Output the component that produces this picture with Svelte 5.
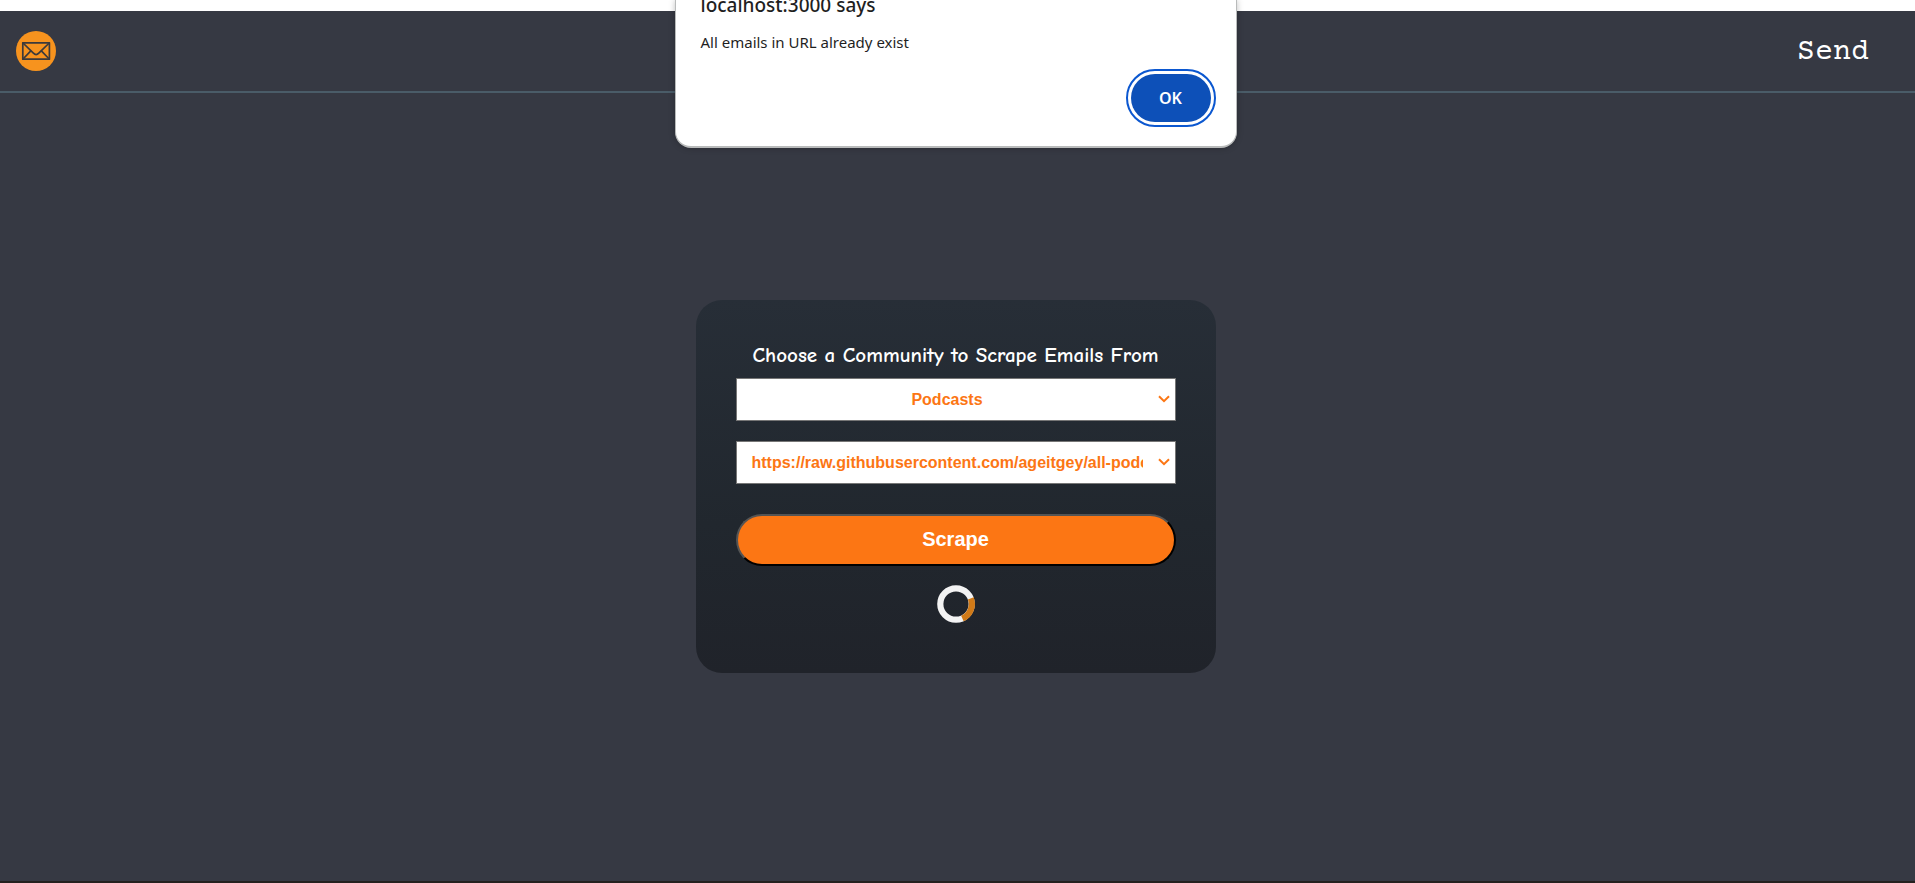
<script>
  const communities = ['Podcasts', 'Startups', 'Newsletters'];
  const sources = [
    'https://raw.githubusercontent.com/ageitgey/all-podcasts/master/README.md'
  ];

  let community = $state('Podcasts');
  let source = $state(sources[0]);
  let loading = $state(true);
  let alertOpen = $state(true);

  function scrape(event) {
    event.preventDefault();
    loading = true;
  }
</script>

<div class="page">
  <header>
    <a class="logo" href="#home" aria-label="Home">
      <svg viewBox="0 0 40 40" width="40" height="40" aria-hidden="true">
        <circle cx="20" cy="20" r="20" fill="#f7931e" />
        <g fill="none" stroke="#3b3a3c" stroke-width="1.7" stroke-linejoin="round" stroke-linecap="round">
          <rect x="6.8" y="11.8" width="26.6" height="16.4" />
          <path d="M7 12 L17.4 22.2 Q20.1 25 22.8 22.2 L33.2 12" />
          <path d="M7 28 L14.6 20.2 M33.2 28 L25.6 20.2" />
        </g>
      </svg>
    </a>
    <nav><a class="send" href="#send">Send</a></nav>
  </header>

  <main>
    <form class="card" onsubmit={scrape}>
      <label for="community">Choose a Community to Scrape Emails From</label>
      <select id="community" bind:value={community}>
        {#each communities as name}
          <option value={name}>{name}</option>
        {/each}
      </select>
      <select class="source" aria-label="Source URL" bind:value={source}>
        {#each sources as url}
          <option value={url}>{url}</option>
        {/each}
      </select>
      <button class="scrape" type="submit">Scrape</button>
      <div class="status" role="status">
        {#if loading}
          <svg viewBox="0 0 38 38" width="38" height="38" aria-hidden="true">
            <circle cx="19" cy="19" r="15.7" fill="none" stroke="#f3f3f3" stroke-width="6.2" />
            <path d="M33.8 13.3 A15.8 15.8 0 0 1 25.4 33.5" fill="none" stroke="#d07a18" stroke-width="6.2" />
          </svg>
        {/if}
      </div>
    </form>
  </main>
</div>

{#if alertOpen}
  <div class="alert" role="alertdialog" aria-labelledby="alert-title" aria-describedby="alert-text">
    <h2 id="alert-title">localhost:3000 says</h2>
    <p id="alert-text">All emails in URL already exist</p>
    <button class="ok" type="button" onclick={() => (alertOpen = false)}>OK</button>
  </div>
{/if}

<style>
  :global(body) {
    background: #fff;
    overflow: hidden;
  }

  .page {
    box-sizing: border-box;
    min-height: 100vh;
    display: flex;
    flex-direction: column;
    border-top: 11px solid #fff;
    border-bottom: 2px solid #24211f;
    background: #363943;
  }

  header {
    display: flex;
    align-items: center;
    justify-content: space-between;
    height: 80px;
    padding: 0 46px 0 16px;
    border-bottom: 2px solid #4a5c68;
  }

  .logo,
  .logo svg,
  .status svg {
    display: block;
  }

  nav {
    padding-top: 4px;
  }

  .send {
    color: #fff;
    font: 30px/40px 'Courier Prime', 'DejaVu Serif', serif;
    text-decoration: none;
  }

  main {
    flex: 1;
    display: flex;
    align-items: center;
    justify-content: center;
    padding: 0 4px 2px 0;
  }

  .card {
    box-sizing: border-box;
    width: 520px;
    max-width: 100%;
    display: flex;
    flex-direction: column;
    padding: 40px;
    border-radius: 26px;
    background: linear-gradient(#272e37, #21272e 60%, #20232a);
  }

  label {
    padding-bottom: 8px;
    color: #fff;
    font: bold 21px/30px 'Comic Sans MS', 'Comic Neue', Lato, sans-serif;
    text-align: center;
  }

  select {
    appearance: none;
    height: 43px;
    margin: 0 0 20px;
    padding: 0 32px 0 15px;
    border: 1px solid #767676;
    border-radius: 0;
    background: #fff
      url("data:image/svg+xml,%3Csvg xmlns='http://www.w3.org/2000/svg' width='12' height='8'%3E%3Cpath d='M1 1.2 6 6.2 11 1.2' fill='none' stroke='%23fc7614' stroke-width='2'/%3E%3C/svg%3E")
      no-repeat right 5px center;
    color: #fc7614;
    font: bold 16px 'Franklin Gothic Medium', 'Liberation Sans', sans-serif;
    text-align: center;
  }

  .source {
    margin-bottom: 30px;
  }

  .scrape {
    height: 52px;
    border: 2px outset #000;
    border-radius: 26px;
    background: #fc7614;
    color: #fff;
    font: bold 20px 'Liberation Sans', Arial, sans-serif;
  }

  .status {
    display: flex;
    justify-content: center;
    height: 48px;
    padding-top: 19px;
  }

  .alert {
    position: absolute;
    top: 0;
    left: calc(50% - 2px);
    transform: translateX(-50%);
    box-sizing: border-box;
    width: 562px;
    max-width: 100%;
    height: 148px;
    display: flex;
    flex-direction: column;
    padding: 0 20px 0 25px;
    border: 1px solid #b9bbbb;
    border-top: 0;
    border-bottom-width: 2px;
    border-radius: 0 0 16px 16px;
    background: #fff;
    box-shadow: 0 0 6px rgb(0 0 0 / 25%);
    color: #1f1f1f;
    font-family: 'Segoe UI', 'Noto Sans', sans-serif;
  }

  h2 {
    margin: -10px 0 0;
    font-size: 19px;
    font-weight: 500;
    line-height: 30px;
  }

  p {
    margin: 11px 0 0;
    font-size: 15px;
    line-height: 22px;
  }

  .ok {
    align-self: flex-end;
    width: 80px;
    height: 48px;
    margin: 21px 5px 0 0;
    border: 0;
    border-radius: 24px;
    outline: 2px solid #0b57d0;
    outline-offset: 3px;
    background: #0d50b8;
    color: #fff;
    font: 600 16px 'Segoe UI', 'Noto Sans', sans-serif;
  }
</style>
